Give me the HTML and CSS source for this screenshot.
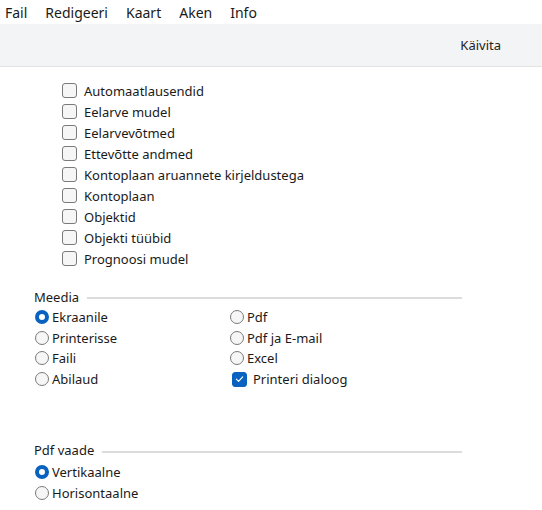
FILE: index.html
```html
<!DOCTYPE html>
<html>
<head>
<meta charset="utf-8">
<link rel="stylesheet" href="styles.css">
</head>
<body>
<div class="menubar">
  <span class="menu-item">Fail</span>
  <span class="menu-item">Redigeeri</span>
  <span class="menu-item">Kaart</span>
  <span class="menu-item">Aken</span>
  <span class="menu-item">Info</span>
</div>
<div class="toolbar">
  <span class="tool-btn">Käivita</span>
</div>
<div class="content">
  <div class="checklist">
    <div class="row"><span class="cb"></span><span>Automaatlausendid</span></div>
    <div class="row"><span class="cb"></span><span>Eelarve mudel</span></div>
    <div class="row"><span class="cb"></span><span>Eelarvevõtmed</span></div>
    <div class="row"><span class="cb"></span><span>Ettevõtte andmed</span></div>
    <div class="row"><span class="cb"></span><span>Kontoplaan aruannete kirjeldustega</span></div>
    <div class="row"><span class="cb"></span><span>Kontoplaan</span></div>
    <div class="row"><span class="cb"></span><span>Objektid</span></div>
    <div class="row"><span class="cb"></span><span>Objekti tüübid</span></div>
    <div class="row"><span class="cb"></span><span>Prognoosi mudel</span></div>
  </div>

  <div class="group media">
    <div class="group-title"><span>Meedia</span><span class="rule"></span></div>
    <div class="cols">
      <div class="col">
        <div class="row"><span class="rb on"></span><span>Ekraanile</span></div>
        <div class="row"><span class="rb"></span><span>Printerisse</span></div>
        <div class="row"><span class="rb"></span><span>Faili</span></div>
        <div class="row"><span class="rb"></span><span>Abilaud</span></div>
      </div>
      <div class="col col2">
        <div class="row"><span class="rb"></span><span>Pdf</span></div>
        <div class="row"><span class="rb"></span><span>Pdf ja E-mail</span></div>
        <div class="row"><span class="rb"></span><span>Excel</span></div>
        <div class="row chk"><span class="cb on"><svg viewBox="0 0 14 14" width="14" height="14"><path d="M3.6 7.2 L6 9.5 L10.4 4.8" fill="none" stroke="#fff" stroke-width="1.3" stroke-linecap="round" stroke-linejoin="round"/></svg></span><span>Printeri dialoog</span></div>
      </div>
    </div>
  </div>

  <div class="group pdf">
    <div class="group-title"><span>Pdf vaade</span><span class="rule"></span></div>
    <div class="row"><span class="rb on"></span><span>Vertikaalne</span></div>
    <div class="row"><span class="rb"></span><span>Horisontaalne</span></div>
  </div>
</div>
</body>
</html>
```

FILE: styles.css
```css
* { box-sizing: border-box; }
body {
  margin: 0;
  background: #fff;
  font-family: "Noto Sans", "Open Sans", sans-serif;
  font-size: 13px;
  color: #1a1a1a;
}
.menubar {
  height: 24px;
  display: flex;
  align-items: center;
  padding-left: 5px;
  font-size: 14px;
}
.menu-item { margin-right: 18px; }
.toolbar {
  height: 43px;
  background: #f3f4f6;
  border-bottom: 1px solid #e3e3e3;
  display: flex;
  align-items: center;
  justify-content: flex-end;
  padding-right: 41px;
}
.tool-btn { color: #222; }
.content { padding-top: 13px; }
.row {
  display: flex;
  align-items: center;
  height: 21px;
  white-space: nowrap;
}
.checklist { margin-left: 62px; }
.checklist .row { gap: 7px; }
.cb {
  width: 15px;
  height: 15px;
  border: 1px solid #7a7a7a;
  border-radius: 3px;
  background: #f6f6f6;
  flex: none;
  display: flex;
  align-items: center;
  justify-content: center;
}
.cb.on { background: #0a62c0; border-color: #0a62c0; }
.cb svg { display: block; }
.rb {
  width: 14px;
  height: 14px;
  border: 1px solid #7a7a7a;
  border-radius: 50%;
  background: #f6f6f6;
  flex: none;
  margin-right: 3px;
}
.rb.on {
  background: #fff;
  border: 4px solid #0a62c0;
}
.group { margin-left: 34px; width: 428px; }
.media { margin-top: 17px; }
.pdf { margin-top: 50px; }
.group-title {
  display: flex;
  align-items: center;
  height: 21px;
}
.pdf .group-title { height: 22px; }
.rule {
  flex: 1;
  height: 2px;
  background: #dcdcdc;
  margin-left: 8px;
  margin-top: 3px;
}
.media .row { height: 20.6px; margin-left: 1px; }
.pdf .row { height: 21px; margin-left: 1px; }
.cols { display: flex; }
.col { width: 195px; }
.col2 .chk { margin-left: 3px; }
.col2 .chk .cb { margin-right: 6px; }
```
